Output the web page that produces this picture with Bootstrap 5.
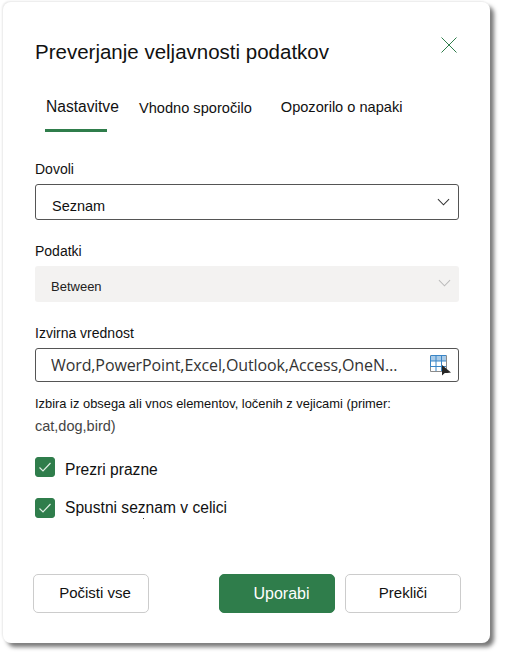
<!doctype html>
<html lang="sl">
<head>
<meta charset="utf-8">
<title>Preverjanje veljavnosti podatkov</title>
<link href="https://cdn.jsdelivr.net/npm/bootstrap@5.3.0/dist/css/bootstrap.min.css" rel="stylesheet">
<style>
html,body{width:505px;height:659px;overflow:hidden;background:#fff}
body{font-family:"Liberation Sans",Arial,sans-serif;color:#111;padding:2px 15px 16px 3px}
.dlg{width:487px;height:641px;background:#fff;border-radius:8px;box-shadow:-1px -1px 2px #e8e8e8,4px 4px 4px #777;padding:38px 31px 0 32px}
.dlg-head{height:36px}
.dlg-title{font-size:20.5px;line-height:24px;margin:0;font-weight:400;color:#111}
.dlg-x{width:16px;height:16px;margin-right:2px;margin-top:-3px}
.dlg-tabs{margin-top:21px;height:37px;border:0;position:relative}
.dlg-tabs .nav-link{font-size:14.6px;line-height:20px;color:#111;padding:0;border:0;background:none;border-radius:0}
.dlg-tabs .tab-a{margin-left:10px;padding:0 0 12px 0;box-sizing:content-box;width:62px;white-space:nowrap;border-bottom:3px solid #2f7d4b;font-size:15.6px;text-indent:1px}
.tab-b{margin-left:32px;margin-top:1px}
.tab-c{margin-left:29px}
.fld-label{font-size:14px;line-height:18px;margin:0 0 6px;color:#111}
.sel{height:36px;font-size:14.5px;border:1px solid #555;border-radius:3px;padding:9px 40px 0 16px;color:#111;
 background-image:url("data:image/svg+xml,%3csvg xmlns='http://www.w3.org/2000/svg' viewBox='0 0 14 8'%3e%3cpath fill='none' stroke='%23333' stroke-width='1.1' d='M1 1l6 6 6-6'/%3e%3c/svg%3e");background-size:13px 8px;background-position:right 8px top 13px}
.sel:disabled{height:36px;border:0;background-color:#f3f2f1;color:#222;font-size:13px;opacity:1;padding-top:5px;
 background-image:url("data:image/svg+xml,%3csvg xmlns='http://www.w3.org/2000/svg' viewBox='0 0 14 8'%3e%3cpath fill='none' stroke='%23bbb' stroke-width='1.1' d='M1 1l6 6 6-6'/%3e%3c/svg%3e")}
.blk-a{margin-top:26px}
.blk-b{margin-top:22px}
.blk-c{margin-top:22px}
.src-wrap{position:relative}
.src-in{height:34px;font-family:"Open Sans",sans-serif;font-size:16px;border:1px solid #555;border-radius:3px;padding:0 60px 0 15px;color:#333;text-overflow:ellipsis;letter-spacing:-.1px}
.src-ic{position:absolute;right:8px;top:6px;width:22px;height:22px}
.hint{font-size:12.9px;line-height:23px;margin:10px 0 0;color:#111}
.hint span{color:#444;font-size:14.5px}
.chk{display:flex;align-items:center;gap:10px;margin:0;padding:0;min-height:0;font-size:15.6px;line-height:20px;color:#111;position:relative}
.chk .form-check-input{width:20px;height:20px;margin:0;float:none;border-radius:3px;background-color:#2f7d4b;border-color:#2f7d4b;background-size:20px;
 background-image:url("data:image/svg+xml,%3csvg xmlns='http://www.w3.org/2000/svg' viewBox='0 0 20 20'%3e%3cpath fill='none' stroke='%23dfeee4' stroke-width='1.2' d='M4.500 10.500l3.500 3.500 7.500-8'/%3e%3c/svg%3e")}
.chk-a{margin-top:19px;height:20px}
.chk-a span{padding-top:5px}
.chk-b{margin-top:21px}
.speck::after{content:"";position:absolute;left:108px;top:20px;width:1px;height:1px;background:#333}
.foot{margin-top:56px;margin-left:-2px;margin-right:-2px}
.foot .btn{width:116px;height:39px;font-size:15px;border-radius:5px;padding:0;color:#111;border:1px solid #ccc;background:#fff}
.foot .btn.clr{padding-left:8px}
.foot .btn.go{background:#2f7d4b;border-color:#2f7d4b;color:#fff;font-size:16px;margin-right:10px;padding-left:9px}
</style>
</head>
<body>
<div class="dlg">
  <div class="dlg-head d-flex justify-content-between align-items-start">
    <h1 class="dlg-title">Preverjanje veljavnosti podatkov</h1>
    <svg class="dlg-x" viewBox="0 0 16 16" aria-label="Zapri"><path d="M.5.5l15 15M15.5.5l-15 15" fill="none" stroke="#2f7d4b" stroke-width="1"/></svg>
  </div>
  <ul class="nav dlg-tabs align-items-start flex-nowrap">
    <li class="nav-item"><a class="nav-link active tab-a" href="#">Nastavitve</a></li>
    <li class="nav-item"><a class="nav-link tab-b" href="#">Vhodno sporočilo</a></li>
    <li class="nav-item"><a class="nav-link tab-c" href="#">Opozorilo o napaki</a></li>
  </ul>
  <div class="blk-a">
    <p class="fld-label">Dovoli</p>
    <select class="form-select sel"><option>Seznam</option></select>
  </div>
  <div class="blk-b">
    <p class="fld-label">Podatki</p>
    <select class="form-select sel" disabled><option>Between</option></select>
  </div>
  <div class="blk-c">
    <p class="fld-label">Izvirna vrednost</p>
    <div class="src-wrap">
      <input class="form-control src-in" type="text" value="Word,PowerPoint,Excel,Outlook,Access,OneNote,Teams,Publisher">
      <svg class="src-ic" viewBox="0 0 22 22">
        <path d="M1.500 1.500h16v16h-16z" fill="#fff" stroke="#8a8a8a"/>
        <path d="M2 2h15v5h-15z" fill="#a9cbe8"/>
        <path d="M2 7h15M2 12.500h15M7 2v15M12.500 2v15M2 1.500h15M1.500 2v11" fill="none" stroke="#3a85c6"/>
        <path d="M13 11v10.500l2.800-2.500 2.500 0 3.700-.5z" fill="#262626"/>
      </svg>
    </div>
  </div>
  <p class="hint">Izbira iz obsega ali vnos elementov, ločenih z vejicami (primer:<br><span>cat,dog,bird)</span></p>
  <label class="form-check chk chk-a"><input class="form-check-input" type="checkbox" checked><span>Prezri prazne</span></label>
  <label class="form-check chk chk-b speck"><input class="form-check-input" type="checkbox" checked>Spustni seznam v celici</label>
  <div class="foot d-flex">
    <button class="btn clr me-auto" type="button">Počisti vse</button>
    <button class="btn go" type="button">Uporabi</button>
    <button class="btn" type="button">Prekliči</button>
  </div>
</div>
</body>
</html>
